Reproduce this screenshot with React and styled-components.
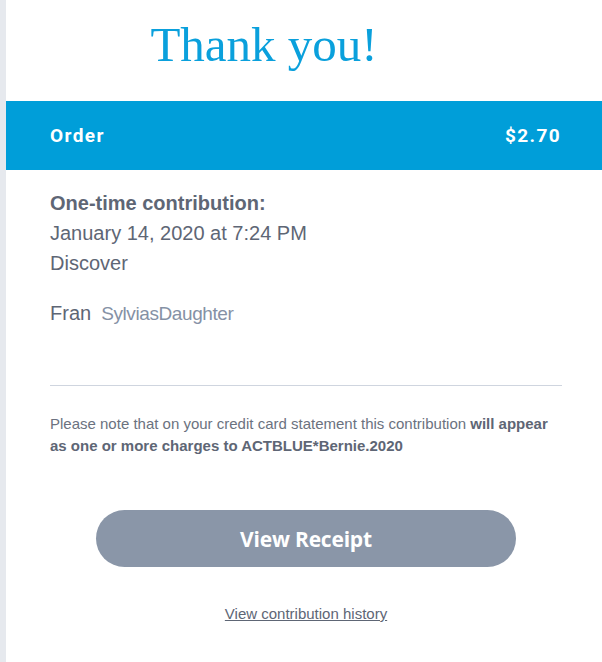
import React from 'react';
import styled, { createGlobalStyle } from 'styled-components';

const GlobalStyle = createGlobalStyle`
  html, body {
    margin: 0;
    padding: 0;
    background-color: #e6e9ee;
  }
  body {
    font-family: "Liberation Sans", Arial, sans-serif;
  }
`;

const Page = styled.div`
  min-height: 662px;
  padding-left: 6px;
  box-sizing: border-box;
`;

const Card = styled.div`
  background-color: #fff;
  min-height: 662px;
`;

const Title = styled.h1`
  margin: 0;
  padding: 11px 80px 22px 0;
  text-align: center;
  font-family: "Liberation Serif", "Times New Roman", serif;
  font-weight: 400;
  font-size: 49px;
  line-height: 68px;
  color: #0aa0dc;
`;

const Band = styled.div`
  height: 69px;
  background-color: #009ed9;
  display: flex;
  align-items: center;
  justify-content: space-between;
  padding: 0 41px 0 44px;
  color: #fff;
  font-family: Roboto, "Liberation Sans", sans-serif;
  font-weight: 700;
  font-size: 19px;
  letter-spacing: 1.4px;
`;

const Body = styled.div`
  padding: 18px 40px 0 44px;
  color: #5e6675;
  font-size: 20px;
`;

const Line = styled.div`
  line-height: 30px;
  font-weight: ${(p) => (p.$bold ? 700 : 400)};
`;

const Donor = styled.div`
  display: flex;
  align-items: baseline;
  gap: 10px;
  margin-top: 20px;
  line-height: 30px;
`;

const Handle = styled.span`
  color: #8591a5;
  font-size: 19px;
  letter-spacing: -0.4px;
`;

const Divider = styled.hr`
  border: none;
  border-top: 1px solid #cfd5df;
  margin: 56px 0 0;
`;

const Note = styled.p`
  margin: 27px 0 0;
  font-size: 15px;
  line-height: 22px;
  color: #6b7280;

  strong {
    color: #5e6675;
  }
`;

const Actions = styled.div`
  display: flex;
  flex-direction: column;
  align-items: center;
  padding: 53px 0 0 4px;
`;

const ReceiptButton = styled.button`
  width: 420px;
  height: 57px;
  border: none;
  border-radius: 29px;
  background-color: #8a96a8;
  color: #fff;
  font-family: "Open Sans", "Liberation Sans", sans-serif;
  font-weight: 700;
  font-size: 21px;
  letter-spacing: -0.2px;
  cursor: pointer;
`;

const HistoryLink = styled.a`
  margin-top: 38px;
  font-size: 15px;
  color: #5e6675;
  text-decoration: underline;
  cursor: pointer;
`;

const App = () => {
  return (
    <Page>
      <GlobalStyle />
      <Card>
        <Title>Thank you!</Title>
        <Band>
          <span>Order</span>
          <span>$2.70</span>
        </Band>
        <Body>
          <Line $bold>One-time contribution:</Line>
          <Line>January 14, 2020 at 7:24 PM</Line>
          <Line>Discover</Line>
          <Donor>
            <span>Fran</span>
            <Handle>SylviasDaughter</Handle>
          </Donor>
          <Divider />
          <Note>
            Please note that on your credit card statement this contribution{' '}
            <strong>will appear as one or more charges to ACTBLUE*Bernie.2020</strong>
          </Note>
        </Body>
        <Actions>
          <ReceiptButton type="button">View Receipt</ReceiptButton>
          <HistoryLink>View contribution history</HistoryLink>
        </Actions>
      </Card>
    </Page>
  );
};

export default App;
